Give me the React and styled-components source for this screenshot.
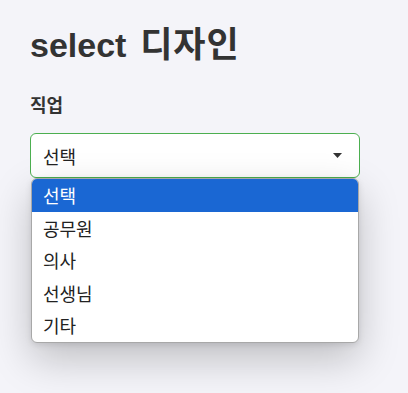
import React from "react";
import styled, { createGlobalStyle } from "styled-components";

const Global = createGlobalStyle`
  html, body { margin: 0; padding: 0; background: #f4f4f9; }
  body { font-family: "Liberation Sans", "Noto Sans CJK KR", sans-serif; color: #333; }
`;

const Page = styled.div`
  box-sizing: border-box;
  min-height: 100vh;
  padding: 22px 48px 0 30px;
`;

const Title = styled.h1`
  margin: 0;
  font-size: 34px;
  line-height: 46px;
  font-weight: 700;
  color: #333;
`;

const TitleKo = styled.span`
  font-size: 35px;
  letter-spacing: 1px;
  margin-left: 3px;
`;

const Label = styled.div`
  margin-top: 26px;
  font-size: 18px;
  line-height: 24px;
  font-weight: 700;
  color: #333;
`;

const Field = styled.div`
  position: relative;
  margin-top: 15px;
`;

const SelectBox = styled.div`
  box-sizing: border-box;
  height: 45px;
  border: 1px solid #4caf50;
  border-radius: 6px;
  background: #fff;
  display: flex;
  align-items: center;
  justify-content: space-between;
  padding: 0 17px 0 12px;
  font-size: 18px;
  color: #222;
`;

const Arrow = styled.svg`
  width: 9px;
  height: 5px;
  display: block;
`;

const List = styled.ul`
  position: absolute;
  top: 45px;
  left: 1px;
  right: 1px;
  margin: 0;
  padding: 0;
  list-style: none;
  background: #fff;
  border: 1px solid #a8a8a8;
  border-radius: 6px;
  overflow: hidden;
  box-shadow: 0 16px 40px rgba(0, 0, 0, 0.22), 0 2px 6px rgba(0, 0, 0, 0.1);
`;

const Item = styled.li`
  height: 32.5px;
  display: flex;
  align-items: center;
  padding-left: 11px;
  font-size: 18px;
  color: ${(p) => (p.$active ? "#fff" : "#222")};
  background: ${(p) => (p.$active ? "#1a67d3" : "transparent")};
`;

const options = ["선택", "공무원", "의사", "선생님", "기타"];

export default function App() {
  return (
    <>
      <Global />
      <Page>
        <Title>
          select<TitleKo> 디자인</TitleKo>
        </Title>
        <Label>직업</Label>
        <Field>
          <SelectBox>
            <span>선택</span>
            <Arrow viewBox="0 0 9 5">
              <path d="M0 0 L9 0 L4.5 5 Z" fill="#333" />
            </Arrow>
          </SelectBox>
          <List>
            {options.map((o, i) => (
              <Item key={o} $active={i === 0}>
                {o}
              </Item>
            ))}
          </List>
        </Field>
      </Page>
    </>
  );
}
